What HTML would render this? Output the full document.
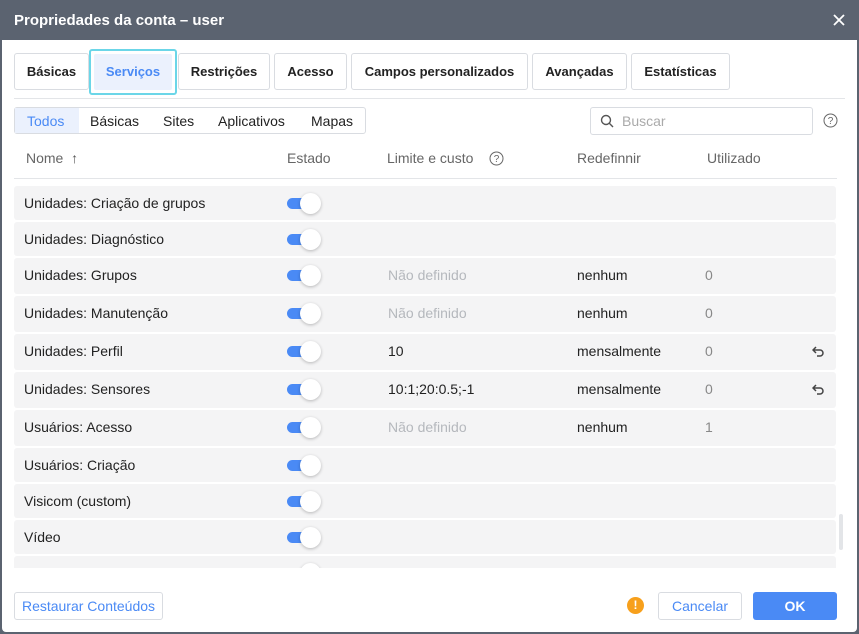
<!DOCTYPE html>
<html><head><meta charset="utf-8"><style>
*{box-sizing:border-box;margin:0;padding:0}
html,body{width:859px;height:634px;overflow:hidden}
body{background:#5b6370;font-family:"Liberation Sans",sans-serif;font-size:14px;color:#222;position:relative}
.dlg{position:absolute;left:2px;top:40px;width:855px;height:592px;background:#fff;border-radius:0 0 4px 4px}
.title{position:absolute;left:0;top:0;width:859px;height:40px;background:#5b6370;color:#fff;font-weight:bold;font-size:15px;padding:12px 0 0 14px}
.a{position:absolute;white-space:nowrap}
.tab{position:absolute;top:53px;height:37px;border:1px solid #d9dce1;border-radius:3px;font-size:13px;font-weight:bold;color:#222;text-align:center;line-height:35px}
.sub{position:absolute;top:107px;height:27px;border:1px solid #d9dce1;border-radius:3px;left:14px;width:352px}
.sub span{position:absolute;top:5px;font-size:14px;color:#222}
.hdr{color:#666;font-size:14px;top:150px}
.row{position:absolute;left:14px;width:822px;height:34px;background:#f4f4f5;border-radius:3px}
.row .n{position:absolute;left:10px;top:9px;font-size:14px;color:#222}
.tg{position:absolute;left:273px;top:12px;width:22px;height:11px;background:#4a8af5;border-radius:6px}
.kn{position:absolute;left:286px;top:7px;width:21px;height:21px;background:#fff;border-radius:50%;box-shadow:0 1px 3px rgba(0,0,0,.25)}
.l{position:absolute;left:374px;top:9px}
.gr{color:#b5b8bd}
.r{position:absolute;left:563px;top:9px}
.u{position:absolute;left:691px;top:9px;color:#888}
.und{position:absolute;left:798px;top:12px}
</style></head><body>
<div class="title">Propriedades da conta – user</div>
<svg class="a" style="left:833px;top:14px" width="12" height="12"><path d="M1 1L11 11M11 1L1 11" stroke="#fff" stroke-width="1.8"/></svg>
<div class="dlg"></div>
<div class="tab" style="left:14px;width:75px">Básicas</div>
<div class="tab" style="left:89px;width:88px;top:49px;height:46px;border:2px solid #6bd6e8;background:#fff;padding:3px"><div style="background:#ebf1fd;height:36px;line-height:36px;color:#4a8af5;border-radius:2px">Serviços</div></div>
<div class="tab" style="left:178px;width:92px">Restrições</div>
<div class="tab" style="left:274px;width:73px">Acesso</div>
<div class="tab" style="left:351px;width:177px">Campos personalizados</div>
<div class="tab" style="left:532px;width:95px">Avançadas</div>
<div class="tab" style="left:631px;width:99px">Estatísticas</div>
<div class="a" style="left:14px;top:98px;width:831px;height:1px;background:#e3e5e8"></div>
<div class="sub"><div style="position:absolute;left:0;top:0;width:64px;height:25px;background:#ebf1fd"></div>
<span style="left:12px;color:#4a8af5">Todos</span><span style="left:75px">Básicas</span><span style="left:148px">Sites</span><span style="left:203px">Aplicativos</span><span style="left:296px">Mapas</span></div>
<div class="a" style="left:590px;top:107px;width:223px;height:28px;border:1px solid #d9dce1;border-radius:3px">
<svg style="position:absolute;left:9px;top:6px" width="14" height="14" viewBox="0 0 14 14"><circle cx="6" cy="6" r="4.5" fill="none" stroke="#555" stroke-width="1.4"/><path d="M9.3 9.3L13 13" stroke="#555" stroke-width="1.4"/></svg>
<span style="position:absolute;left:31px;top:5px;color:#aaa">Buscar</span></div>
<svg class="a" style="left:823px;top:113px" width="15" height="15"><circle cx="7.5" cy="7.5" r="6.5" fill="none" stroke="#666"/><text x="7.5" y="11" font-size="10" text-anchor="middle" fill="#666" font-family="Liberation Sans">?</text></svg>
<div class="a hdr" style="left:26px">Nome&nbsp; <b style="font-weight:normal;color:#555">↑</b></div>
<div class="a hdr" style="left:287px">Estado</div>
<div class="a hdr" style="left:387px">Limite e custo</div>
<svg class="a" style="left:489px;top:151px" width="15" height="15"><circle cx="7.5" cy="7.5" r="6.5" fill="none" stroke="#666"/><text x="7.5" y="11" font-size="10" text-anchor="middle" fill="#666" font-family="Liberation Sans">?</text></svg>
<div class="a hdr" style="left:577px">Redefinnir</div>
<div class="a hdr" style="left:707px">Utilizado</div>
<div class="a" style="left:14px;top:178px;width:823px;height:1px;background:#e3e5e8"></div>
<div class="a" style="left:0;top:182px;width:859px;height:386px;overflow:hidden">
<div style="position:absolute;left:0;top:-182px;width:859px;height:600px">
<div class="row" style="top:186px"><span class="n">Unidades: Criação de grupos</span><i class="tg"></i><i class="kn"></i></div>
<div class="row" style="top:222px"><span class="n">Unidades: Diagnóstico</span><i class="tg"></i><i class="kn"></i></div>
<div class="row" style="top:258px;height:36px"><span class="n">Unidades: Grupos</span><i class="tg"></i><i class="kn"></i><span class="l gr">Não definido</span><span class="r">nenhum</span><span class="u">0</span></div>
<div class="row" style="top:296px;height:36px"><span class="n">Unidades: Manutenção</span><i class="tg"></i><i class="kn"></i><span class="l gr">Não definido</span><span class="r">nenhum</span><span class="u">0</span></div>
<div class="row" style="top:334px;height:36px"><span class="n">Unidades: Perfil</span><i class="tg"></i><i class="kn"></i><span class="l">10</span><span class="r">mensalmente</span><span class="u">0</span><svg class="und" width="12" height="11"><path d="M4 1L1 4L4 7M1 4H8A3 3 0 0 1 8 10H5" fill="none" stroke="#444" stroke-width="1.5"/></svg></div>
<div class="row" style="top:372px;height:36px"><span class="n">Unidades: Sensores</span><i class="tg"></i><i class="kn"></i><span class="l">10:1;20:0.5;-1</span><span class="r">mensalmente</span><span class="u">0</span><svg class="und" width="12" height="11"><path d="M4 1L1 4L4 7M1 4H8A3 3 0 0 1 8 10H5" fill="none" stroke="#444" stroke-width="1.5"/></svg></div>
<div class="row" style="top:410px;height:36px"><span class="n">Usuários: Acesso</span><i class="tg"></i><i class="kn"></i><span class="l gr">Não definido</span><span class="r">nenhum</span><span class="u">1</span></div>
<div class="row" style="top:448px"><span class="n">Usuários: Criação</span><i class="tg"></i><i class="kn"></i></div>
<div class="row" style="top:484px"><span class="n">Visicom (custom)</span><i class="tg"></i><i class="kn"></i></div>
<div class="row" style="top:520px"><span class="n">Vídeo</span><i class="tg"></i><i class="kn"></i></div>
<div class="row" style="top:556px"><span class="n">Webgis (custom)</span><i class="tg"></i><i class="kn"></i></div>
</div></div>
<div class="a" style="left:839px;top:514px;width:4px;height:36px;background:#e3e5e8;border-radius:2px"></div>
<div class="a" style="left:14px;top:592px;width:149px;height:28px;border:1px solid #d9dce1;border-radius:3px;color:#4a8af5;text-align:center;line-height:26px">Restaurar Conteúdos</div>
<div class="a" style="left:627px;top:597px;width:17px;height:17px;background:#f7a01c;border-radius:50%;color:#fff;font-weight:bold;font-size:12px;text-align:center;line-height:17px">!</div>
<div class="a" style="left:658px;top:592px;width:84px;height:28px;border:1px solid #d9dce1;border-radius:3px;color:#4a8af5;text-align:center;line-height:26px">Cancelar</div>
<div class="a" style="left:753px;top:592px;width:84px;height:28px;background:#4a8af5;border-radius:3px;color:#fff;font-weight:bold;text-align:center;line-height:28px">OK</div>
</body></html>
